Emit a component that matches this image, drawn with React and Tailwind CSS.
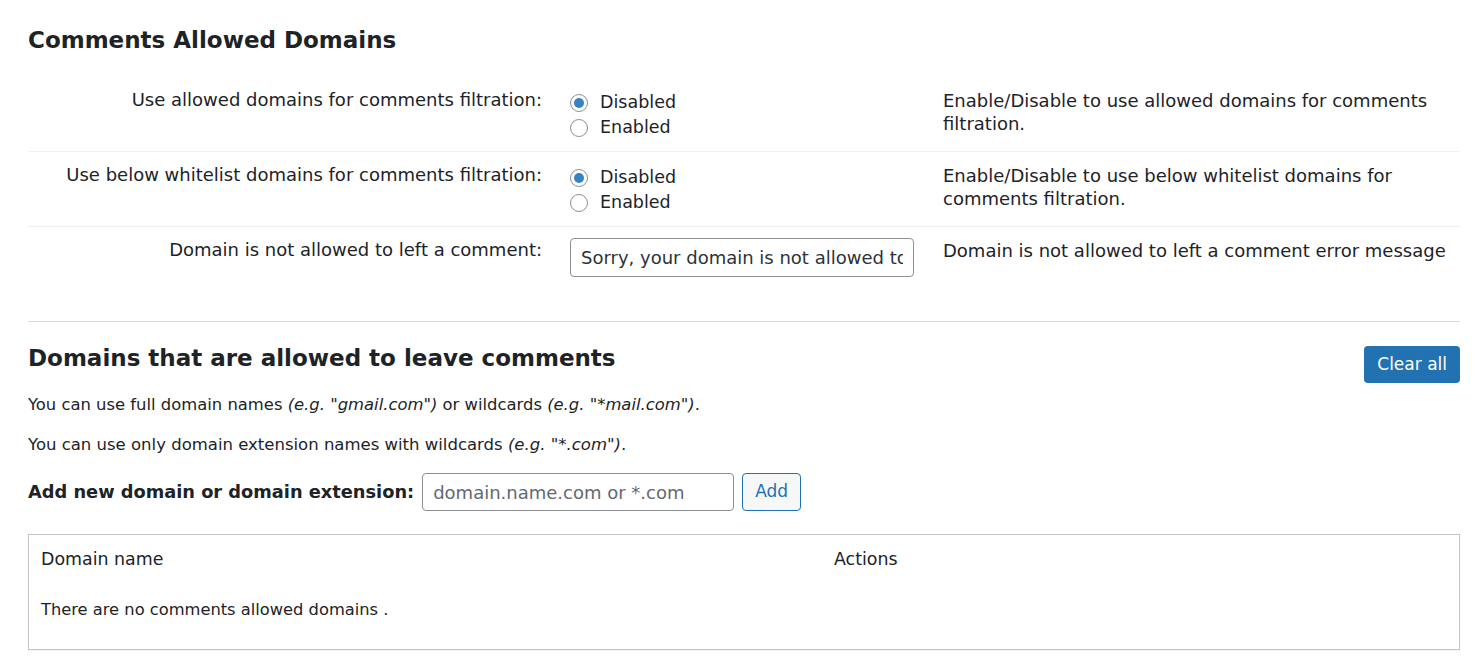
import React from 'react'

const dv = { fontFamily: '"DejaVu Sans", Verdana, sans-serif' }

function Radio({ checked, label }) {
  return (
    <label className="flex h-[25px] items-center gap-[12px] text-[17.5px] text-[#1d2327]">
      <span className="flex h-[18px] w-[18px] items-center justify-center rounded-full border border-[#8c8f94] bg-white">
        {checked && <span className="h-[10px] w-[10px] rounded-full bg-[#3582c4]" />}
      </span>
      <span>{label}</span>
    </label>
  )
}

function Row({ label, children, desc, last }) {
  return (
    <div className={`grid grid-cols-[528px_373px_1fr] ${last ? '' : 'border-b border-[#f0f0f1]'}`}>
      <div className="pr-[14px] pt-[13px] text-right text-[18px] leading-5 text-[#1d2327]">{label}</div>
      <div className="pl-[14px]">{children}</div>
      <div className="pl-[14px] pt-[12px] text-[18px] leading-[23px] text-[#1d2327]">{desc}</div>
    </div>
  )
}

export default function App() {
  return (
    <div className="min-h-screen bg-white px-[28px] pt-[26px] text-[#1d2327]" style={dv}>
      <h2 className="text-[23px] font-bold leading-7">Comments Allowed Domains</h2>

      <div className="mt-[23px] w-[1432px]">
        <Row label="Use allowed domains for comments filtration:" desc={<>Enable/Disable to use allowed domains for comments filtration.</>}>
          <div className="pb-[11px] pt-[13px]">
            <Radio checked label="Disabled" />
            <Radio label="Enabled" />
          </div>
        </Row>
        <Row label="Use below whitelist domains for comments filtration:" desc={<>Enable/Disable to use below whitelist domains for comments filtration.</>}>
          <div className="pb-[11px] pt-[13px]">
            <Radio checked label="Disabled" />
            <Radio label="Enabled" />
          </div>
        </Row>
        <Row last label="Domain is not allowed to left a comment:" desc="Domain is not allowed to left a comment error message">
          <div className="pb-[13px] pt-[11px]">
            <input
              readOnly
              value="Sorry, your domain is not allowed to leave a comment."
              className="h-[39px] w-[344px] rounded-[4px] border border-[#8c8f94] bg-white px-[10px] text-[18px] text-[#2c3338] outline-none"
              style={dv}
            />
          </div>
        </Row>
      </div>

      <hr className="mt-[31px] w-[1432px] border-t border-[#dcdcde]" />

      <div className="flex w-[1432px] items-start justify-between pt-[22px]">
        <h2 className="text-[23px] font-bold leading-7">Domains that are allowed to leave comments</h2>
        <button className="mt-[2px] h-[37px] rounded-[4px] bg-[#2271b1] px-[13px] text-[17px] text-white" style={dv}>Clear all</button>
      </div>

      <p className="mt-[12px] text-[16.4px] leading-5">
        You can use full domain names <em>(e.g. "gmail.com")</em> or wildcards <em>(e.g. "*mail.com")</em>.
      </p>
      <p className="mt-[20px] text-[16.5px] leading-5">
        You can use only domain extension names with wildcards <em>(e.g. "*.com")</em>.
      </p>

      <div className="mt-[18px] flex items-center gap-[8px]">
        <span className="text-[17.8px] font-bold">Add new domain or domain extension:</span>
        <input
          placeholder="domain.name.com or *.com"
          className="h-[38px] w-[312px] rounded-[4px] border border-[#8c8f94] bg-white px-[10px] text-[18px] text-[#2c3338] outline-none placeholder:text-[#646970]"
          style={dv}
        />
        <button className="h-[38px] rounded-[4px] border border-[#2271b1] bg-[#f6f7f7] px-[12px] text-[17px] text-[#2271b1]" style={dv}>Add</button>
      </div>

      <div className="mt-[23px] w-[1432px] border border-[#c3c4c7] shadow-[0_1px_1px_rgba(0,0,0,0.04)]">
        <div className="grid grid-cols-[793px_1fr] px-[12px] pt-[14px] text-[17.4px] leading-5">
          <div>Domain name</div>
          <div>Actions</div>
        </div>
        <div className="px-[12px] pb-[29px] pt-[31px] text-[16.3px] leading-5">There are no comments allowed domains .</div>
      </div>
    </div>
  )
}
